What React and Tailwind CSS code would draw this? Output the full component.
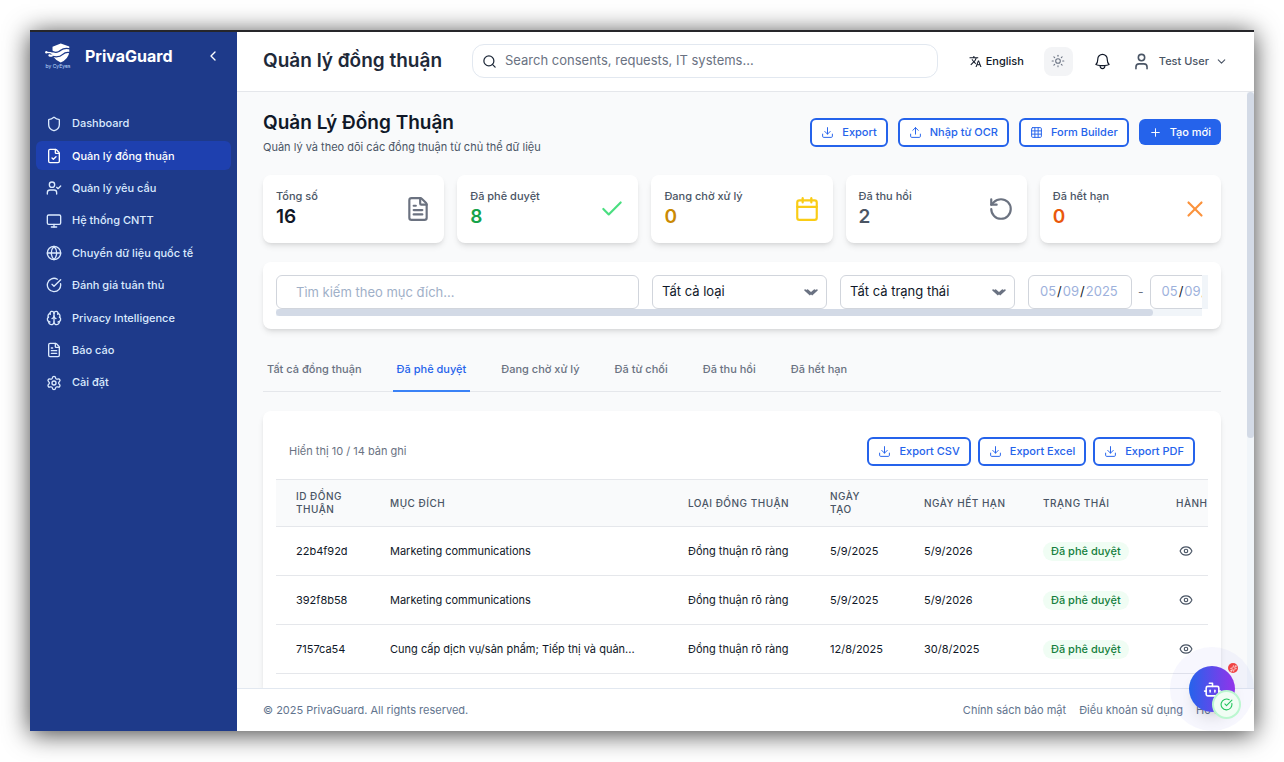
import React from "react";
import {
  Shield, FileCheck, UserCheck, Monitor, Globe, CircleCheckBig, Brain, FileText, Settings,
  ChevronLeft, ChevronDown, Search, Sun, User, Download, Upload, Grid3x3, Plus, Check,
  Calendar, RotateCcw, X, Eye, Bot, Sparkles,
} from "lucide-react";
import { MdTranslate } from "react-icons/md";
import { HiOutlineBell } from "react-icons/hi2";

const NAV = [
  { label: "Dashboard", icon: Shield },
  { label: "Quản lý đồng thuận", icon: FileCheck, active: true },
  { label: "Quản lý yêu cầu", icon: UserCheck },
  { label: "Hệ thống CNTT", icon: Monitor },
  { label: "Chuyển dữ liệu quốc tế", icon: Globe },
  { label: "Đánh giá tuân thủ", icon: CircleCheckBig },
  { label: "Privacy Intelligence", icon: Brain },
  { label: "Báo cáo", icon: FileText },
  { label: "Cài đặt", icon: Settings },
];

const STATS = [
  { label: "Tổng số", value: 16, icon: FileText, text: "text-[#111827]", tint: "text-[#6b7280]" },
  { label: "Đã phê duyệt", value: 8, icon: Check, text: "text-[#16a34a]", tint: "text-[#4ade80]" },
  { label: "Đang chờ xử lý", value: 0, icon: Calendar, text: "text-[#ca8a04]", tint: "text-[#facc15]" },
  { label: "Đã thu hồi", value: 2, icon: RotateCcw, text: "text-[#4b5563]", tint: "text-[#6b7280]" },
  { label: "Đã hết hạn", value: 0, icon: X, text: "text-[#ea580c]", tint: "text-[#fb923c]" },
];

const TABS = ["Tất cả đồng thuận", "Đã phê duyệt", "Đang chờ xử lý", "Đã từ chối", "Đã thu hồi", "Đã hết hạn"];

const COLUMNS = [
  { label: "ID đồng thuận", style: "w-[94px]" },
  { label: "Mục đích", style: "w-[298px]" },
  { label: "Loại đồng thuận", style: "w-[142px] whitespace-nowrap" },
  { label: "Ngày tạo", style: "w-[94px]" },
  { label: "Ngày hết hạn", style: "w-[119px] whitespace-nowrap" },
  { label: "Trạng thái", style: "w-[133px]" },
  { label: "Hành động", style: "w-[120px] whitespace-nowrap" },
];

const ROWS = [
  { id: "22b4f92d", purpose: "Marketing communications", created: "5/9/2025", expires: "5/9/2026" },
  { id: "392f8b58", purpose: "Marketing communications", created: "5/9/2025", expires: "5/9/2026" },
  { id: "7157ca54", purpose: "Cung cấp dịch vụ/sản phẩm; Tiếp thị và quản...", created: "12/8/2025", expires: "30/8/2025" },
];

function Logo() {
  return (
    <div className="flex w-7 flex-col items-center">
      <svg viewBox="0 0 76 58" className="h-[20px] w-[26px]" aria-hidden="true">
        <path d="M22 11 L46 1 L71 10 L71 26 Q69 46 46 57 Q32 51 24 40 L14 40 L10 35 L22 33 Z" fill="#fff" />
        <path d="M18 23 Q34 32 46 21 Q56 13 74 17 M22 39 Q42 43 52 33 Q60 25 74 28" fill="none" stroke="#1e3a8a" strokeWidth="4" />
        <path d="M3 27 L16 28 Q30 37 44 28" fill="none" stroke="#fff" strokeWidth="4" />
        <circle cx="4" cy="27" r="3.5" fill="#fff" />
        <circle cx="13" cy="36" r="3" fill="#fff" />
      </svg>
      <span className="text-[5px] leading-[6px] whitespace-nowrap text-blue-200">by CyEyes</span>
    </div>
  );
}

function OutlineButton({ icon: Icon, children }) {
  return (
    <button className="flex h-[29px] items-center gap-2 rounded-md border-2 border-[#2563eb] bg-white px-[9px] text-[11px] font-medium whitespace-nowrap text-[#2563eb]">
      <Icon className="size-[13px]" strokeWidth={1.8} />
      {children}
    </button>
  );
}

function FilterSelect({ label, option }) {
  return (
    <div className="relative w-[175px] shrink-0">
      <select aria-label={label} className="h-[34px] w-full appearance-none rounded-md border border-gray-300 bg-white px-[9px] text-[13px] text-gray-900">
        <option>{option}</option>
      </select>
      <svg viewBox="0 0 24 12" className="pointer-events-none absolute top-[14px] right-[9px] h-[7px] w-[14px] text-gray-500" fill="none" stroke="currentColor" strokeWidth="3" strokeLinecap="round" aria-hidden="true">
        <path d="M2 2 L10 9 L18 2 M6 2 L14 9 L22 2" />
      </svg>
    </div>
  );
}

function DateField({ label, value }) {
  return (
    <input
      type="date"
      aria-label={label}
      defaultValue={value}
      className="h-[34px] w-[104px] shrink-0 rounded-md border border-gray-300 bg-white px-[10px] text-[13px] text-gray-900 [&::-webkit-calendar-picker-indicator]:hidden [&::-webkit-datetime-edit-day-field]:text-[#9db1dc] [&::-webkit-datetime-edit-month-field]:text-[#9db1dc] [&::-webkit-datetime-edit-year-field]:text-[#9db1dc]"
    />
  );
}

function Sidebar() {
  return (
    <aside className="flex w-[207px] shrink-0 flex-col bg-[#1e3a8a]">
      <div className="flex h-12 items-center pr-4 pl-[14px]">
        <Logo />
        <span className="ml-[13px] flex-1 text-base font-bold text-white">PrivaGuard</span>
        <button aria-label="Thu gọn" className="text-white"><ChevronLeft className="size-4" strokeWidth={2} /></button>
      </div>
      <nav className="mt-[29px] flex h-72 flex-col justify-between px-[6px]">
        {NAV.map(({ label, icon: Icon, active }) => (
          <a key={label} href="#" className={"flex h-[29px] items-center gap-[10px] rounded-md px-[10px] text-[11px] font-medium " + (active ? "bg-[#1e40af] text-white" : "text-[#dbeafe]")}>
            <Icon className="size-4" strokeWidth={2} />
            {label}
          </a>
        ))}
      </nav>
    </aside>
  );
}

function Header() {
  return (
    <header className="flex h-[60px] shrink-0 items-center border-b border-gray-200 bg-white px-[26px] pb-px">
      <h1 className="w-[209px] shrink-0 text-[19px] font-semibold whitespace-nowrap text-gray-800">Quản lý đồng thuận</h1>
      <label className="flex h-[34px] w-[466px] items-center gap-2 rounded-xl border border-slate-200 px-[9px] text-gray-800">
        <Search className="size-[15px]" strokeWidth={2} />
        <input type="text" aria-label="Search" placeholder="Search consents, requests, IT systems..." className="min-w-0 flex-1 text-[13px] outline-none placeholder:text-gray-500" />
      </label>
      <div className="ml-auto flex items-center">
        <button className="flex items-center gap-1 text-[11px] font-medium text-gray-900"><MdTranslate className="size-[13px]" />English</button>
        <button aria-label="Theme" className="ml-5 flex size-[29px] items-center justify-center rounded-lg bg-gray-100 text-gray-500"><Sun className="size-[14px]" strokeWidth={1.8} /></button>
        <button aria-label="Notifications" className="ml-5 text-gray-900"><HiOutlineBell className="size-[19px]" /></button>
        <button className="ml-5 flex items-center text-[11px] font-medium text-gray-600">
          <User className="size-[19px]" strokeWidth={2} />
          <span className="ml-2">Test User</span>
          <ChevronDown className="ml-[6px] size-[13px]" strokeWidth={2} />
        </button>
      </div>
    </header>
  );
}

function Filters() {
  return (
    <section className="shrink-0 rounded-lg bg-white p-[13px] shadow-md">
      <div className="flex h-[41px]">
        <div className="flex min-w-0 flex-1 flex-col">
          <div className="flex h-[34px] items-center gap-[13px] overflow-hidden">
            <input type="text" aria-label="Tìm kiếm" placeholder="Tìm kiếm theo mục đích..." className="h-[34px] w-[363px] shrink-0 rounded-md border border-gray-300 px-[19px] text-[13px] placeholder:text-[#9fb0c8]" />
            <FilterSelect label="Loại" option="Tất cả loại" />
            <FilterSelect label="Trạng thái" option="Tất cả trạng thái" />
            <div className="flex items-center gap-[6px] text-xs text-gray-500">
              <DateField label="Từ ngày" value="2025-05-09" />
              <span>-</span>
              <DateField label="Đến ngày" value="2025-05-09" />
            </div>
          </div>
          <div className="h-[7px] bg-slate-100"><div className="h-full w-[94.7%] rounded-full bg-[#d3dae6]" /></div>
        </div>
        <div className="h-[34px] w-[6px] bg-slate-100" />
      </div>
    </section>
  );
}

function ConsentTable() {
  return (
    <section className="shrink-0 grow rounded-t-lg bg-white p-[13px] pb-0 shadow-md">
      <div className="flex items-center justify-between p-[13px]">
        <p className="text-[11px] text-gray-500">Hiển thị 10 / 14 bản ghi</p>
        <div className="flex gap-[7px]">
          <OutlineButton icon={Download}>Export CSV</OutlineButton>
          <OutlineButton icon={Download}>Export Excel</OutlineButton>
          <OutlineButton icon={Download}>Export PDF</OutlineButton>
        </div>
      </div>
      <div className="overflow-hidden">
        <table className="w-[1000px] table-fixed text-left text-[11px] text-gray-900">
          <thead>
            <tr className="h-[47px] border-y border-gray-200 bg-gray-50">
              {COLUMNS.map((c) => (
                <th key={c.label} className={c.style + " px-5 text-[10px] leading-[13px] font-medium tracking-wider text-gray-600 uppercase"}>{c.label}</th>
              ))}
            </tr>
          </thead>
          <tbody>
            {ROWS.map((r) => (
              <tr key={r.id} className="h-[49px] border-b border-gray-200 whitespace-nowrap">
                <td className="pl-5">{r.id}</td>
                <td className="pl-5">{r.purpose}</td>
                <td className="pl-5">Đồng thuận rõ ràng</td>
                <td className="pl-5">{r.created}</td>
                <td className="pl-5">{r.expires}</td>
                <td className="pl-5"><span className="inline-flex h-[19px] items-center rounded-full bg-[#f0fdf4] px-2 font-medium text-[#15803d]">Đã phê duyệt</span></td>
                <td className="pl-5"><button aria-label="Xem" className="flex px-[3px] text-gray-600"><Eye className="size-[14px]" strokeWidth={2} /></button></td>
              </tr>
            ))}
          </tbody>
        </table>
      </div>
    </section>
  );
}

function Assistant() {
  return (
    <div className="absolute right-0 bottom-0 size-[84px] rounded-full bg-[#6366f1]/5">
      <button aria-label="Trợ lý" className="absolute top-[19px] left-[19px] flex size-[46px] items-center justify-center rounded-full bg-[linear-gradient(90deg,#2563eb,#9333ea)] text-white shadow-lg">
        <Bot className="size-[19px]" strokeWidth={2} />
      </button>
      <span className="absolute top-4 left-[58px] flex size-[10px] items-center justify-center rounded-full bg-[#ef4444] text-white"><Sparkles className="size-[7px]" /></span>
      <span className="absolute top-[43px] left-[42px] flex size-[29px] items-center justify-center rounded-full border-2 border-[#bbf7d0] bg-[#f0fdf4] text-[#22c55e]"><CircleCheckBig className="size-[13px]" /></span>
    </div>
  );
}

export default function App() {
  return (
    <div className="h-screen bg-white px-[30px] pt-[30px] pb-[31px] font-['Inter',sans-serif]">
      <div className="relative flex h-full overflow-hidden border-t-2 border-[#26262a] bg-white shadow-[0_3px_24px_rgba(0,0,0,0.75)]">
        <Sidebar />
        <div className="flex min-w-0 flex-1 flex-col">
          <Header />
          <div className="flex min-h-0 flex-1 bg-[#f9fafb]">
            <main className="flex min-w-0 flex-1 flex-col gap-[19px] overflow-hidden px-[26px] pt-4">
              <div className="flex shrink-0 items-center justify-between">
                <div>
                  <h2 className="text-[19px] leading-[30px] font-semibold text-gray-900">Quản Lý Đồng Thuận</h2>
                  <p className="text-[11px] leading-[18px] text-gray-600">Quản lý và theo dõi các đồng thuận từ chủ thể dữ liệu</p>
                </div>
                <div className="flex items-center gap-[10px]">
                  <OutlineButton icon={Download}>Export</OutlineButton>
                  <OutlineButton icon={Upload}>Nhập từ OCR</OutlineButton>
                  <OutlineButton icon={Grid3x3}>Form Builder</OutlineButton>
                  <button className="flex h-[26px] items-center gap-2 rounded-md bg-[#2563eb] px-[10px] text-[11px] font-medium text-white"><Plus className="size-[13px]" strokeWidth={1.8} />Tạo mới</button>
                </div>
              </div>
              <div className="grid shrink-0 grid-cols-5 gap-[13px]">
                {STATS.map(({ label, value, icon: Icon, text, tint }) => (
                  <div key={label} className="flex h-[68px] items-center justify-between rounded-lg bg-white px-[13px] shadow-md">
                    <div className="pb-[3px]">
                      <p className="text-[11px] leading-[18px] font-medium text-gray-600">{label}</p>
                      <p className={"text-[19px] leading-6 font-semibold " + text}>{value}</p>
                    </div>
                    <Icon className={"size-[26px] " + tint} strokeWidth={2} />
                  </div>
                ))}
              </div>
              <Filters />
              <div className="flex h-[44px] shrink-0 gap-[27px] border-b border-gray-200">
                {TABS.map((t, i) => (
                  <button key={t} className={"-mb-px border-b-2 px-1 text-[11px] font-medium whitespace-nowrap " + (i === 1 ? "border-[#3b82f6] text-[#2563eb]" : "border-transparent text-gray-500")}>{t}</button>
                ))}
              </div>
              <ConsentTable />
            </main>
            <div className="w-[7px] shrink-0 bg-slate-100"><div className="h-[58%] rounded-full bg-[#d3dae6]" /></div>
          </div>
          <footer className="flex h-[43px] shrink-0 items-center justify-between border-t border-slate-200 bg-white px-[26px] text-[11px] text-slate-500">
            <p>© 2025 PrivaGuard. All rights reserved.</p>
            <div className="flex gap-[13px]">
              <a href="#">Chính sách bảo mật</a>
              <a href="#">Điều khoản sử dụng</a>
              <a href="#">Hỗ trợ</a>
            </div>
          </footer>
        </div>
        <Assistant />
      </div>
    </div>
  );
}
